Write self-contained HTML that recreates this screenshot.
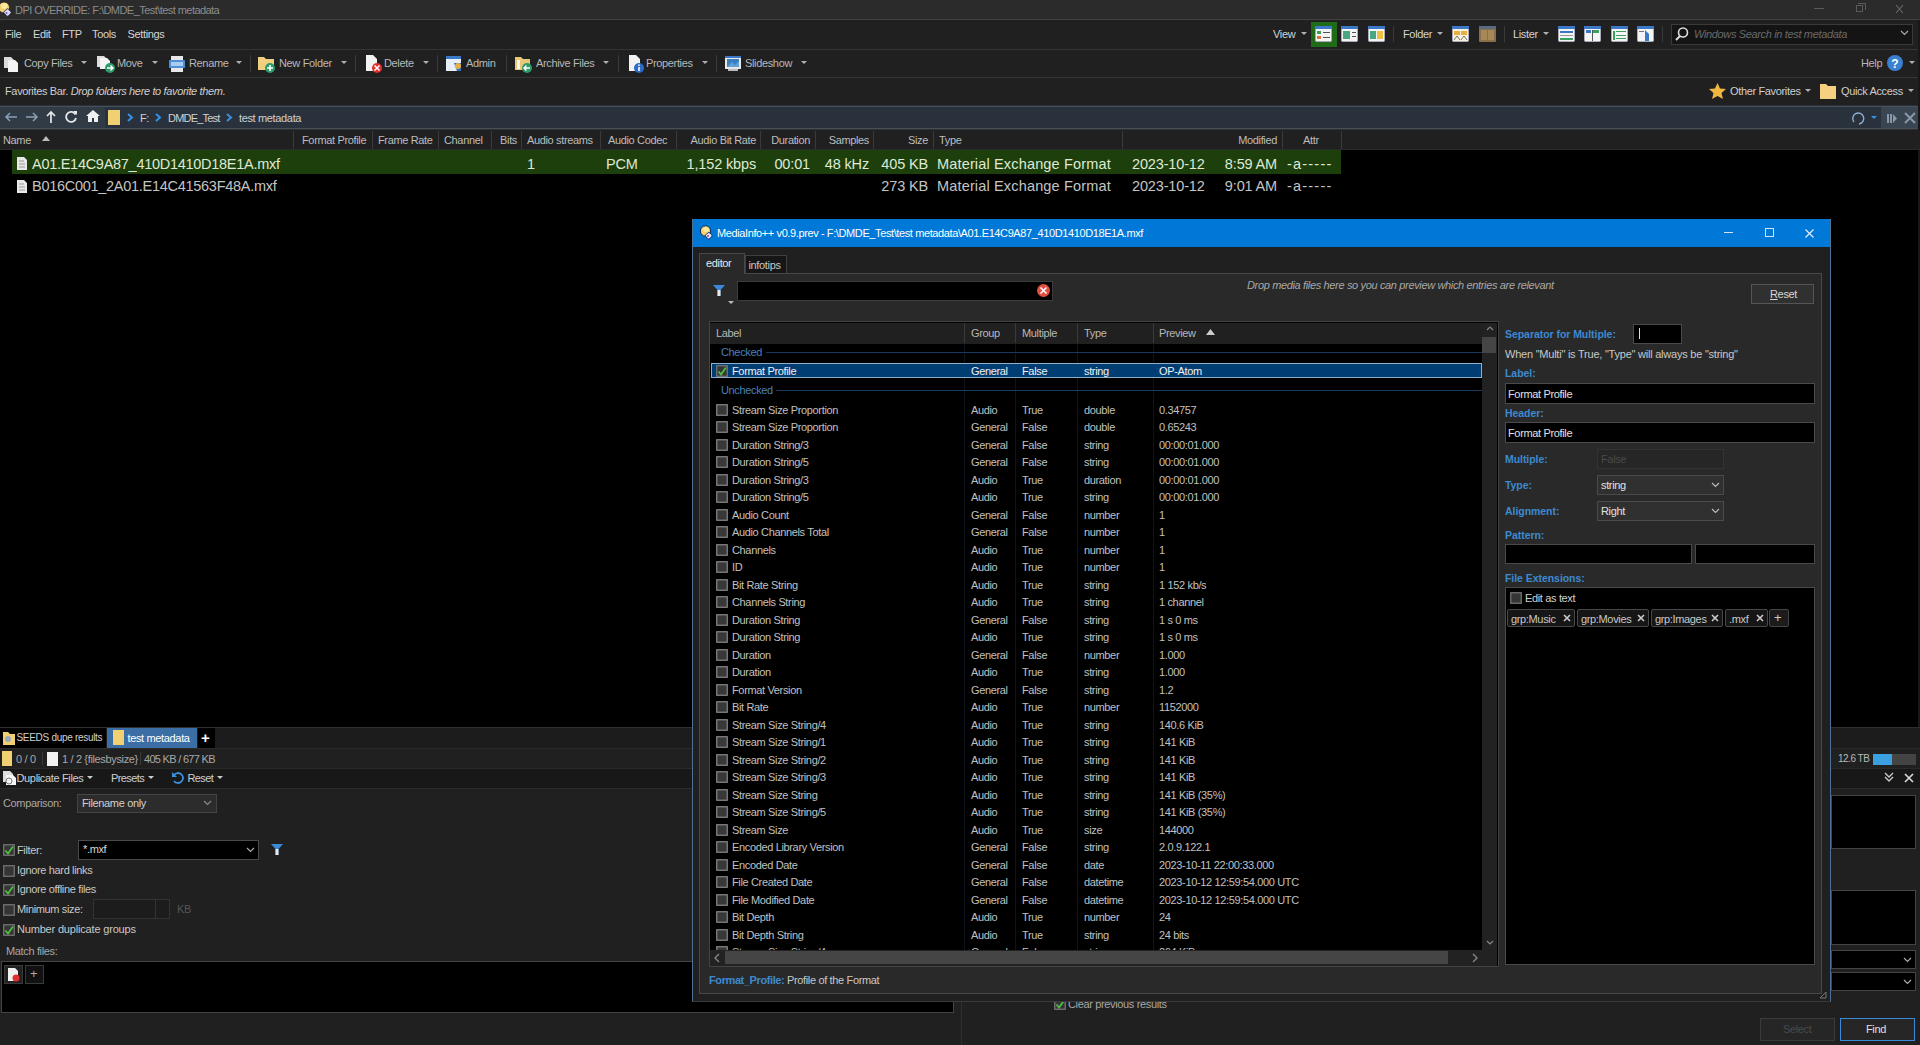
<!DOCTYPE html><html><head><meta charset="utf-8"><style>
html,body{margin:0;padding:0;}
body{width:1920px;height:1045px;overflow:hidden;position:relative;background:#000;font-family:"Liberation Sans",sans-serif;color:#c8c8c8;}
.a{position:absolute;box-sizing:border-box;}
.t{position:absolute;white-space:nowrap;font-size:11px;letter-spacing:-0.35px;}
</style></head><body>
<div class="a" style="left:0px;top:0px;width:1920px;height:19px;background:#2b2b2b"></div>
<div class="a" style="left:0px;top:19px;width:1920px;height:1px;background:#424242"></div>
<div class="a" style="left:0px;top:20px;width:1920px;height:1px;background:#1b1b1b"></div>
<svg class="a" style="left:-2px;top:1px" width="16" height="17" viewBox="0 0 16 17"><circle cx="6" cy="6.5" r="5.5" fill="#f4d070" stroke="#1a1830" stroke-width="0.8"/><circle cx="6.5" cy="5" r="3" fill="#fbe9a0"/><rect x="6.5" y="8.5" width="6" height="6" rx="1.5" transform="rotate(45 9.5 11.5)" fill="#dcd6fa" stroke="#1a1830" stroke-width="0.8"/><circle cx="8.5" cy="12" r="1" fill="#6a68a8"/></svg>
<div class="t" style="left:15px;top:1.5px;line-height:16px;color:#8c8c8c;letter-spacing:-0.55px;">DPI OVERRIDE: F:\DMDE_Test\test metadata</div>
<div class="a" style="left:1814px;top:8px;width:10px;height:1px;background:#5a5a5a"></div>
<div class="a" style="left:1856px;top:5px;width:7px;height:7px;border:1px solid #5a5a5a"></div>
<div class="a" style="left:1858px;top:3px;width:7px;height:1px;background:#5a5a5a"></div>
<div class="a" style="left:1865px;top:3px;width:1px;height:7px;background:#5a5a5a"></div>
<svg class="a" style="left:1895px;top:4px" width="9" height="10" viewBox="0 0 9 10"><path d="M1 1L8 9M8 1L1 9" stroke="#6a6a6a" stroke-width="1.1"/></svg>
<div class="a" style="left:0px;top:20px;width:1920px;height:29px;background:#202020"></div>
<div class="a" style="left:0px;top:49px;width:1920px;height:1px;background:#353535"></div>
<div class="t" style="left:5px;top:26.0px;line-height:16px;color:#d4d4d4;">File</div>
<div class="t" style="left:33px;top:26.0px;line-height:16px;color:#d4d4d4;">Edit</div>
<div class="t" style="left:62px;top:26.0px;line-height:16px;color:#d4d4d4;">FTP</div>
<div class="t" style="left:92px;top:26.0px;line-height:16px;color:#d4d4d4;">Tools</div>
<div class="t" style="left:127.5px;top:26.0px;line-height:16px;color:#d4d4d4;">Settings</div>
<div class="t" style="left:1273px;top:26.0px;line-height:16px;color:#d4d4d4;">View</div>
<div class="a" style="left:1300.5px;top:32.25px;width:0;height:0;border-left:3.5px solid transparent;border-right:3.5px solid transparent;border-top:3.5px solid #b0b0b0"></div>
<div class="a" style="left:1311px;top:22px;width:26px;height:25px;background:#1f6b18"></div>
<svg class="a" style="left:1315px;top:26px" width="17" height="16" viewBox="0 0 17 16"><rect x="0.5" y="0.5" width="16" height="15" rx="1" fill="#f4f4f4" stroke="#aab"/><rect x="0" y="0" width="17" height="3" fill="#3b78c8"/><rect x="2" y="5" width="4" height="3" fill="#3aa060"/><rect x="2" y="10" width="4" height="3" fill="#e07040"/><rect x="8" y="6" width="7" height="1" fill="#555"/><rect x="8" y="11" width="7" height="1" fill="#555"/></svg>
<svg class="a" style="left:1341px;top:26px" width="17" height="16" viewBox="0 0 17 16"><rect x="0.5" y="0.5" width="16" height="15" rx="1" fill="#f4f4f4" stroke="#aab"/><rect x="0" y="0" width="17" height="3" fill="#3b78c8"/><rect x="2" y="5" width="7" height="8" fill="#4aa880"/><rect x="11" y="6" width="4" height="1" fill="#555"/><rect x="11" y="10" width="4" height="1" fill="#555"/></svg>
<svg class="a" style="left:1368px;top:26px" width="17" height="16" viewBox="0 0 17 16"><rect x="0.5" y="0.5" width="16" height="15" rx="1" fill="#f4f4f4" stroke="#aab"/><rect x="0" y="0" width="17" height="3" fill="#3b78c8"/><rect x="2" y="5" width="6" height="8" fill="#4aa880"/><rect x="9" y="5" width="6" height="8" fill="#f0c040"/></svg>
<div class="a" style="left:1393px;top:26px;width:1px;height:16px;background:#3a3a3a"></div>
<div class="t" style="left:1403px;top:26.0px;line-height:16px;color:#d4d4d4;">Folder</div>
<div class="a" style="left:1436.5px;top:32.25px;width:0;height:0;border-left:3.5px solid transparent;border-right:3.5px solid transparent;border-top:3.5px solid #b0b0b0"></div>
<svg class="a" style="left:1452px;top:26px" width="17" height="16" viewBox="0 0 17 16"><rect x="0.5" y="0.5" width="16" height="15" rx="1" fill="#f8f0d8" stroke="#aab"/><rect x="0" y="0" width="17" height="3" fill="#3b78c8"/><rect x="2" y="5" width="6" height="4" fill="#e8b040"/><rect x="9" y="5" width="6" height="4" fill="#e8b040"/><path d="M2 14L5 10L8 14M9 14L12 10L15 14" stroke="#777" fill="none"/></svg>
<svg class="a" style="left:1479px;top:26px" width="17" height="16" viewBox="0 0 17 16"><rect x="0" y="0" width="17" height="16" rx="1" fill="#8a7048"/><rect x="0" y="0" width="17" height="3" fill="#5a6a80"/><rect x="2" y="4" width="6" height="10" fill="#a88858"/><rect x="9" y="4" width="6" height="10" fill="#a88858"/></svg>
<div class="a" style="left:1504px;top:26px;width:1px;height:16px;background:#3a3a3a"></div>
<div class="t" style="left:1513px;top:26.0px;line-height:16px;color:#d4d4d4;">Lister</div>
<div class="a" style="left:1542.5px;top:32.25px;width:0;height:0;border-left:3.5px solid transparent;border-right:3.5px solid transparent;border-top:3.5px solid #b0b0b0"></div>
<svg class="a" style="left:1558px;top:26px" width="17" height="16" viewBox="0 0 17 16"><rect x="0.5" y="0.5" width="16" height="15" rx="1" fill="#f4f4f4" stroke="#aab"/><rect x="0" y="0" width="17" height="3" fill="#3b78c8"/><rect x="2" y="5" width="13" height="2" fill="#3b78c8"/><rect x="2" y="9" width="13" height="1" fill="#999"/><rect x="2" y="12" width="13" height="2" fill="#3aa060"/></svg>
<svg class="a" style="left:1584px;top:26px" width="17" height="16" viewBox="0 0 17 16"><rect x="0.5" y="0.5" width="16" height="15" rx="1" fill="#f4f4f4" stroke="#aab"/><rect x="0" y="0" width="17" height="3" fill="#3b78c8"/><rect x="2" y="4" width="5" height="3" fill="#3b78c8"/><rect x="9" y="4" width="6" height="3" fill="#3aa060"/><rect x="8" y="4" width="1" height="11" fill="#555"/></svg>
<svg class="a" style="left:1611px;top:26px" width="17" height="16" viewBox="0 0 17 16"><rect x="0.5" y="0.5" width="16" height="15" rx="1" fill="#f4f4f4" stroke="#aab"/><rect x="0" y="0" width="17" height="3" fill="#3b78c8"/><rect x="2" y="5" width="2" height="9" fill="#3aa060"/><rect x="5" y="5" width="10" height="1" fill="#3aa060"/><rect x="5" y="9" width="10" height="1" fill="#3aa060"/><rect x="5" y="12" width="10" height="1" fill="#3aa060"/></svg>
<svg class="a" style="left:1637px;top:26px" width="17" height="16" viewBox="0 0 17 16"><rect x="0.5" y="0.5" width="16" height="15" rx="1" fill="#f4f4f4" stroke="#aab"/><rect x="0" y="0" width="17" height="3" fill="#3b78c8"/><path d="M8 4L12 8V15H8Z" fill="#3b78c8"/><rect x="2" y="5" width="5" height="1" fill="#777"/></svg>
<div class="a" style="left:1662px;top:26px;width:1px;height:16px;background:#3a3a3a"></div>
<div class="a" style="left:1671px;top:24px;width:242px;height:21px;background:#141414;border:1px solid #3a3a3a"></div>
<svg class="a" style="left:1674px;top:26px" width="16" height="16" viewBox="0 0 16 16"><circle cx="9" cy="6.5" r="4.5" stroke="#ddd" stroke-width="1.6" fill="none"/><path d="M6 10L2 14" stroke="#ddd" stroke-width="2"/></svg>
<div class="t" style="left:1694px;top:26.0px;line-height:16px;color:#6a6a6a;font-style:italic;">Windows Search in test metadata</div>
<svg class="a" style="left:1900px;top:30px" width="9" height="6" viewBox="0 0 9 6"><path d="M1 1L4.5 4.5L8 1" stroke="#aaa" fill="none" stroke-width="1.2"/></svg>
<div class="a" style="left:0px;top:50px;width:1920px;height:27px;background:#202020"></div>
<div class="a" style="left:0px;top:77px;width:1920px;height:1px;background:#353535"></div>
<svg class="a" style="left:3px;top:55px" width="18" height="18" viewBox="0 0 18 18"><path d="M1 2H8L11 5V13H1Z" fill="#dcdcdc"/><path d="M5 5H12L15 8V17H5Z" fill="#f4f4f4"/></svg>
<div class="t" style="left:24px;top:55.0px;line-height:16px;color:#b8b8b8;">Copy Files</div>
<div class="a" style="left:80.5px;top:61.25px;width:0;height:0;border-left:3.5px solid transparent;border-right:3.5px solid transparent;border-top:3.5px solid #b0b0b0"></div>
<svg class="a" style="left:96px;top:54px" width="20" height="20" viewBox="0 0 20 20"><path d="M1 2H8L11 5V13H1Z" fill="#dcdcdc"/><path d="M4 4H11L14 7V15H4Z" fill="#f4f4f4"/><circle cx="14" cy="14" r="5" fill="#2e9a6a"/><path d="M11 14H17M14.5 11.5L17 14L14.5 16.5" stroke="#fff" stroke-width="1.4" fill="none"/></svg>
<div class="t" style="left:117px;top:55.0px;line-height:16px;color:#b8b8b8;">Move</div>
<div class="a" style="left:151.5px;top:61.25px;width:0;height:0;border-left:3.5px solid transparent;border-right:3.5px solid transparent;border-top:3.5px solid #b0b0b0"></div>
<svg class="a" style="left:168px;top:55px" width="18" height="18" viewBox="0 0 18 18"><rect x="3" y="1" width="12" height="5" fill="#e8e8e8"/><rect x="1" y="5" width="16" height="8" rx="1" fill="#4f8fd8"/><rect x="3" y="7" width="12" height="4" fill="#a8cdf0"/><rect x="3" y="13" width="12" height="4" fill="#e8e8e8"/></svg>
<div class="t" style="left:189px;top:55.0px;line-height:16px;color:#b8b8b8;">Rename</div>
<div class="a" style="left:235.5px;top:61.25px;width:0;height:0;border-left:3.5px solid transparent;border-right:3.5px solid transparent;border-top:3.5px solid #b0b0b0"></div>
<div class="a" style="left:250px;top:55px;width:1px;height:17px;background:#3a3a3a"></div>
<svg class="a" style="left:257px;top:54px" width="20" height="20" viewBox="0 0 20 20"><path d="M1 3H7L9 5H17V16H1Z" fill="#f0d080"/><circle cx="13" cy="14" r="5" fill="#2e9a6a"/><path d="M10 14H16M13 11V17" stroke="#fff" stroke-width="1.6"/></svg>
<div class="t" style="left:279px;top:55.0px;line-height:16px;color:#b8b8b8;">New Folder</div>
<div class="a" style="left:340.5px;top:61.25px;width:0;height:0;border-left:3.5px solid transparent;border-right:3.5px solid transparent;border-top:3.5px solid #b0b0b0"></div>
<div class="a" style="left:355px;top:55px;width:1px;height:17px;background:#3a3a3a"></div>
<svg class="a" style="left:364px;top:54px" width="20" height="20" viewBox="0 0 20 20"><path d="M2 1H9L13 5V17H2Z" fill="#f2f2f2"/><circle cx="13" cy="14" r="5" fill="#e03030"/><path d="M10.5 11.5L15.5 16.5M15.5 11.5L10.5 16.5" stroke="#fff" stroke-width="1.5"/></svg>
<div class="t" style="left:384px;top:55.0px;line-height:16px;color:#b8b8b8;">Delete</div>
<div class="a" style="left:422.5px;top:61.25px;width:0;height:0;border-left:3.5px solid transparent;border-right:3.5px solid transparent;border-top:3.5px solid #b0b0b0"></div>
<div class="a" style="left:437px;top:55px;width:1px;height:17px;background:#3a3a3a"></div>
<svg class="a" style="left:445px;top:54px" width="20" height="20" viewBox="0 0 20 20"><rect x="1" y="2" width="15" height="15" fill="#e8eef8"/><rect x="1" y="2" width="15" height="3" fill="#3b78c8"/><path d="M9 9L16 9L16 17L12 17Z" fill="#3070b8"/><circle cx="13" cy="12" r="3" fill="#e8b040"/></svg>
<div class="t" style="left:466px;top:55.0px;line-height:16px;color:#b8b8b8;">Admin</div>
<div class="a" style="left:506px;top:55px;width:1px;height:17px;background:#3a3a3a"></div>
<svg class="a" style="left:514px;top:54px" width="20" height="20" viewBox="0 0 20 20"><path d="M1 3H7L9 5H16V16H1Z" fill="#e8c878"/><rect x="3" y="6" width="3" height="9" fill="#f4f4f4"/><circle cx="13" cy="14" r="5" fill="#2e9a6a"/><path d="M16 14H10M12.5 11.5L10 14L12.5 16.5" stroke="#fff" stroke-width="1.4" fill="none"/></svg>
<div class="t" style="left:536px;top:55.0px;line-height:16px;color:#b8b8b8;">Archive Files</div>
<div class="a" style="left:602.5px;top:61.25px;width:0;height:0;border-left:3.5px solid transparent;border-right:3.5px solid transparent;border-top:3.5px solid #b0b0b0"></div>
<div class="a" style="left:618px;top:55px;width:1px;height:17px;background:#3a3a3a"></div>
<svg class="a" style="left:627px;top:54px" width="20" height="20" viewBox="0 0 20 20"><path d="M2 1H9L13 5V17H2Z" fill="#f2f2f2"/><circle cx="12" cy="14" r="5" fill="#2c6cc8"/><rect x="11.2" y="13" width="1.6" height="4" fill="#fff"/><rect x="11.2" y="10.5" width="1.6" height="1.5" fill="#fff"/></svg>
<div class="t" style="left:646px;top:55.0px;line-height:16px;color:#b8b8b8;">Properties</div>
<div class="a" style="left:701.5px;top:61.25px;width:0;height:0;border-left:3.5px solid transparent;border-right:3.5px solid transparent;border-top:3.5px solid #b0b0b0"></div>
<div class="a" style="left:716px;top:55px;width:1px;height:17px;background:#3a3a3a"></div>
<svg class="a" style="left:724px;top:54px" width="20" height="20" viewBox="0 0 20 20"><rect x="1" y="2" width="16" height="13" fill="#e8e8e8"/><rect x="1" y="2" width="16" height="2" fill="#3b78c8"/><rect x="3" y="5" width="12" height="8" fill="#3a80c0"/><path d="M3 13L8 8L11 11L15 7V13Z" fill="#60a0d8"/><rect x="4" y="15" width="10" height="2" fill="#bbb"/></svg>
<div class="t" style="left:745px;top:55.0px;line-height:16px;color:#b8b8b8;">Slideshow</div>
<div class="a" style="left:800.5px;top:61.25px;width:0;height:0;border-left:3.5px solid transparent;border-right:3.5px solid transparent;border-top:3.5px solid #b0b0b0"></div>
<div class="t" style="left:1861px;top:55.0px;line-height:16px;color:#b8b8b8;">Help</div>
<svg class="a" style="left:1886px;top:54px" width="18" height="18" viewBox="0 0 18 18"><circle cx="9" cy="9" r="8" fill="#3a7fd0"/><text x="9" y="13.5" font-size="12" font-weight="bold" text-anchor="middle" fill="#fff" font-family="Liberation Sans">?</text></svg>
<div class="a" style="left:1908.5px;top:61.25px;width:0;height:0;border-left:3.5px solid transparent;border-right:3.5px solid transparent;border-top:3.5px solid #b0b0b0"></div>
<div class="a" style="left:0px;top:78px;width:1920px;height:27px;background:#202020"></div>
<div class="t" style="left:5px;top:83.0px;line-height:16px;color:#cfcfcf;">Favorites Bar. <i>Drop folders here to favorite them.</i></div>
<svg class="a" style="left:1708px;top:82px" width="19" height="18" viewBox="0 0 19 18"><path d="M9.5 1L12 6.5L18 7L13.5 11L15 17L9.5 14L4 17L5.5 11L1 7L7 6.5Z" fill="#f0b840"/></svg>
<div class="t" style="left:1730px;top:83.0px;line-height:16px;color:#cfcfcf;">Other Favorites</div>
<div class="a" style="left:1804.5px;top:89.25px;width:0;height:0;border-left:3.5px solid transparent;border-right:3.5px solid transparent;border-top:3.5px solid #b0b0b0"></div>
<svg class="a" style="left:1819px;top:82px" width="19" height="18" viewBox="0 0 19 18"><path d="M1 2H7L9 4H17V17H1Z" fill="#f4d080"/></svg>
<div class="t" style="left:1841px;top:83.0px;line-height:16px;color:#cfcfcf;">Quick Access</div>
<div class="a" style="left:1907.5px;top:89.25px;width:0;height:0;border-left:3.5px solid transparent;border-right:3.5px solid transparent;border-top:3.5px solid #b0b0b0"></div>
<div class="a" style="left:0px;top:105px;width:1920px;height:25px;background:#29323c"></div>
<div class="a" style="left:0px;top:107px;width:105px;height:21px;background:#303b46"></div>
<div class="a" style="left:0px;top:106px;width:1920px;height:1px;background:#4a5058"></div>
<div class="a" style="left:1881px;top:107px;width:37px;height:21px;background:#3a4552"></div>
<div class="a" style="left:0px;top:128px;width:1920px;height:1px;background:#4e4e4e"></div>
<div class="a" style="left:1918px;top:20px;width:2px;height:1025px;background:#181818"></div>
<svg class="a" style="left:3px;top:109px" width="16" height="16" viewBox="0 0 16 16"><path d="M14 8H3M7 4L3 8L7 12" stroke="#8aa0b8" stroke-width="1.5" fill="none"/></svg>
<svg class="a" style="left:24px;top:109px" width="16" height="16" viewBox="0 0 16 16"><path d="M2 8H13M9 4L13 8L9 12" stroke="#8aa0b8" stroke-width="1.5" fill="none"/></svg>
<svg class="a" style="left:43px;top:109px" width="16" height="16" viewBox="0 0 16 16"><path d="M8 14V3M4 7L8 3L12 7" stroke="#e8e8e8" stroke-width="1.7" fill="none"/></svg>
<svg class="a" style="left:63px;top:109px" width="16" height="16" viewBox="0 0 16 16"><path d="M12.5 5.5A5 5 0 1 0 13 9" stroke="#e8e8e8" stroke-width="1.8" fill="none"/><path d="M10 2H14V6Z" fill="#e8e8e8"/></svg>
<svg class="a" style="left:85px;top:108px" width="16" height="16" viewBox="0 0 16 16"><path d="M8 2L1 8H3V14H13V8H15Z" fill="#f0f0f0"/><rect x="7" y="10" width="2" height="4" fill="#2c3844"/></svg>
<div class="a" style="left:108px;top:110px;width:12px;height:15px;background:#f0d070"></div>
<svg class="a" style="left:127px;top:113px" width="7" height="9" viewBox="0 0 7 9"><path d="M1 1L5 4.5L1 8" stroke="#3a90e0" stroke-width="2" fill="none"/></svg>
<svg class="a" style="left:155px;top:113px" width="7" height="9" viewBox="0 0 7 9"><path d="M1 1L5 4.5L1 8" stroke="#3a90e0" stroke-width="2" fill="none"/></svg>
<svg class="a" style="left:226px;top:113px" width="7" height="9" viewBox="0 0 7 9"><path d="M1 1L5 4.5L1 8" stroke="#3a90e0" stroke-width="2" fill="none"/></svg>
<div class="t" style="left:140px;top:109.5px;line-height:16px;color:#d0d0d0;">F:</div>
<div class="t" style="left:168px;top:109.5px;line-height:16px;color:#d0d0d0;letter-spacing:-0.8px;">DMDE_Test</div>
<div class="t" style="left:239px;top:109.5px;line-height:16px;color:#d0d0d0;">test metadata</div>
<svg class="a" style="left:1850px;top:110px" width="16" height="16" viewBox="0 0 16 16"><path d="M4 12A5.5 5.5 0 1 1 9 14" stroke="#8ab0d8" stroke-width="1.4" fill="none"/></svg>
<div class="a" style="left:1870.5px;top:116.25px;width:0;height:0;border-left:3.5px solid transparent;border-right:3.5px solid transparent;border-top:3.5px solid #3a90e0"></div>
<svg class="a" style="left:1885px;top:110px" width="16" height="16" viewBox="0 0 16 16"><rect x="2" y="4" width="2" height="9" fill="#8898a8"/><rect x="5" y="4" width="2" height="9" fill="#8898a8"/><path d="M8 4L12 8.5L8 13Z" fill="#8898a8"/></svg>
<svg class="a" style="left:1902px;top:110px" width="16" height="16" viewBox="0 0 16 16"><path d="M3 3L13 13M13 3L3 13" stroke="#8898a8" stroke-width="2"/></svg>
<div class="a" style="left:0px;top:130px;width:1920px;height:20px;background:#202020"></div>
<div class="a" style="left:0px;top:149px;width:1920px;height:1px;background:#2a2a2a"></div>
<div class="a" style="left:293px;top:131px;width:1px;height:18px;background:#3a3a3a"></div>
<div class="a" style="left:372px;top:131px;width:1px;height:18px;background:#3a3a3a"></div>
<div class="a" style="left:438px;top:131px;width:1px;height:18px;background:#3a3a3a"></div>
<div class="a" style="left:491px;top:131px;width:1px;height:18px;background:#3a3a3a"></div>
<div class="a" style="left:521px;top:131px;width:1px;height:18px;background:#3a3a3a"></div>
<div class="a" style="left:600px;top:131px;width:1px;height:18px;background:#3a3a3a"></div>
<div class="a" style="left:676px;top:131px;width:1px;height:18px;background:#3a3a3a"></div>
<div class="a" style="left:760px;top:131px;width:1px;height:18px;background:#3a3a3a"></div>
<div class="a" style="left:815px;top:131px;width:1px;height:18px;background:#3a3a3a"></div>
<div class="a" style="left:873px;top:131px;width:1px;height:18px;background:#3a3a3a"></div>
<div class="a" style="left:933px;top:131px;width:1px;height:18px;background:#3a3a3a"></div>
<div class="a" style="left:1122px;top:131px;width:1px;height:18px;background:#3a3a3a"></div>
<div class="a" style="left:1282px;top:131px;width:1px;height:18px;background:#3a3a3a"></div>
<div class="a" style="left:1341px;top:131px;width:1px;height:18px;background:#3a3a3a"></div>
<div class="t" style="left:3px;top:132.0px;line-height:16px;color:#bdbdbd;">Name</div>
<svg class="a" style="left:42px;top:136px" width="8" height="5" viewBox="0 0 8 5"><path d="M0 5L4 0L8 5Z" fill="#bbb"/></svg>
<div class="t" style="left:302px;top:132.0px;line-height:16px;color:#bdbdbd;">Format Profile</div>
<div class="t" style="left:378px;top:132.0px;line-height:16px;color:#bdbdbd;">Frame Rate</div>
<div class="t" style="left:444px;top:132.0px;line-height:16px;color:#bdbdbd;">Channel</div>
<div class="t" style="right:1403px;top:132.0px;line-height:16px;color:#bdbdbd;">Bits</div>
<div class="t" style="left:527px;top:132.0px;line-height:16px;color:#bdbdbd;">Audio streams</div>
<div class="t" style="left:608px;top:132.0px;line-height:16px;color:#bdbdbd;">Audio Codec</div>
<div class="t" style="right:1164px;top:132.0px;line-height:16px;color:#bdbdbd;">Audio Bit Rate</div>
<div class="t" style="right:1110px;top:132.0px;line-height:16px;color:#bdbdbd;">Duration</div>
<div class="t" style="right:1051px;top:132.0px;line-height:16px;color:#bdbdbd;">Samples</div>
<div class="t" style="right:992px;top:132.0px;line-height:16px;color:#bdbdbd;">Size</div>
<div class="t" style="left:939px;top:132.0px;line-height:16px;color:#bdbdbd;">Type</div>
<div class="t" style="right:643px;top:132.0px;line-height:16px;color:#bdbdbd;">Modified</div>
<div class="t" style="left:1303px;top:132.0px;line-height:16px;color:#bdbdbd;">Attr</div>
<div class="a" style="left:12px;top:150px;width:1329px;height:23.5px;background:#1d3f0b"></div>
<svg class="a" style="left:16px;top:156.0px" width="12" height="15" viewBox="0 0 12 15"><path d="M1 1H8L11 4V14H1Z" fill="#e8e8e8"/><path d="M3 5H8M3 8H9M3 11H9" stroke="#999"/></svg>
<div class="t" style="left:32px;top:153.5px;line-height:20px;font-size:14.5px;letter-spacing:-0.15px;color:#dfe9d6;letter-spacing:-0.28px;">A01.E14C9A87_410D1410D18E1A.mxf</div>
<div class="t" style="left:527px;top:153.5px;line-height:20px;font-size:14.5px;letter-spacing:-0.15px;color:#dfe9d6;">1</div>
<div class="t" style="left:606px;top:153.5px;line-height:20px;font-size:14.5px;letter-spacing:-0.15px;color:#dfe9d6;">PCM</div>
<div class="t" style="right:1164px;top:153.5px;line-height:20px;font-size:14.5px;letter-spacing:-0.15px;color:#dfe9d6;">1,152 kbps</div>
<div class="t" style="right:1110px;top:153.5px;line-height:20px;font-size:14.5px;letter-spacing:-0.15px;color:#dfe9d6;">00:01</div>
<div class="t" style="right:1051px;top:153.5px;line-height:20px;font-size:14.5px;letter-spacing:-0.15px;color:#dfe9d6;">48 kHz</div>
<div class="t" style="right:992px;top:153.5px;line-height:20px;font-size:14.5px;letter-spacing:-0.15px;color:#dfe9d6;">405 KB</div>
<div class="t" style="left:937px;top:153.5px;line-height:20px;font-size:14.5px;letter-spacing:-0.15px;color:#dfe9d6;letter-spacing:0.16px;">Material Exchange Format</div>
<div class="t" style="left:1132px;top:153.5px;line-height:20px;font-size:14.5px;letter-spacing:-0.15px;color:#dfe9d6;">2023-10-12</div>
<div class="t" style="right:643px;top:153.5px;line-height:20px;font-size:14.5px;letter-spacing:-0.15px;color:#dfe9d6;">8:59 AM</div>
<div class="t" style="left:1287px;top:153.5px;line-height:20px;font-size:14.5px;letter-spacing:-0.15px;color:#dfe9d6;letter-spacing:1.2px;">-a-----</div>
<svg class="a" style="left:16px;top:178.8px" width="12" height="15" viewBox="0 0 12 15"><path d="M1 1H8L11 4V14H1Z" fill="#e8e8e8"/><path d="M3 5H8M3 8H9M3 11H9" stroke="#999"/></svg>
<div class="t" style="left:32px;top:176.3px;line-height:20px;font-size:14.5px;letter-spacing:-0.15px;color:#c4c4c4;letter-spacing:-0.28px;">B016C001_2A01.E14C41563F48A.mxf</div>
<div class="t" style="right:992px;top:176.3px;line-height:20px;font-size:14.5px;letter-spacing:-0.15px;color:#c4c4c4;">273 KB</div>
<div class="t" style="left:937px;top:176.3px;line-height:20px;font-size:14.5px;letter-spacing:-0.15px;color:#c4c4c4;letter-spacing:0.16px;">Material Exchange Format</div>
<div class="t" style="left:1132px;top:176.3px;line-height:20px;font-size:14.5px;letter-spacing:-0.15px;color:#c4c4c4;">2023-10-12</div>
<div class="t" style="right:643px;top:176.3px;line-height:20px;font-size:14.5px;letter-spacing:-0.15px;color:#c4c4c4;">9:01 AM</div>
<div class="t" style="left:1287px;top:176.3px;line-height:20px;font-size:14.5px;letter-spacing:-0.15px;color:#c4c4c4;letter-spacing:1.2px;">-a-----</div>
<div class="a" style="left:0px;top:727px;width:1920px;height:1px;background:#2e2e2e"></div>
<div class="a" style="left:0px;top:728px;width:1920px;height:20px;background:#1c1c1c"></div>
<div class="a" style="left:0px;top:728px;width:106px;height:20px;background:#000"></div>
<div class="a" style="left:107px;top:728px;width:90px;height:20px;background:#3c6ea6"></div>
<div class="a" style="left:198px;top:728px;width:17px;height:20px;background:#000"></div>
<svg class="a" style="left:2px;top:730px" width="14" height="16" viewBox="0 0 14 16"><path d="M1 2H6L8 4H13V15H1Z" fill="#f0d070"/><circle cx="6" cy="9" r="3" fill="#9ab"/></svg>
<div class="t" style="left:16.5px;top:729.5px;line-height:16px;color:#d0d0d0;font-size:10px;letter-spacing:-0.3px;">SEEDS dupe results</div>
<div class="a" style="left:113px;top:730px;width:11px;height:15px;background:#f0d070"></div>
<div class="t" style="left:127.5px;top:729.5px;line-height:16px;color:#ffffff;">test metadata</div>
<div class="t" style="left:201px;top:729.5px;line-height:16px;color:#fff;font-size:15px;font-weight:bold;">+</div>
<div class="a" style="left:0px;top:748px;width:1920px;height:1px;background:#2a2a2a"></div>
<div class="a" style="left:0px;top:749px;width:1920px;height:19px;background:#202020"></div>
<div class="a" style="left:2px;top:751px;width:10px;height:15px;background:#f0d070"></div>
<div class="t" style="left:16px;top:751.0px;line-height:16px;color:#a8a8a8;">0 / 0</div>
<div class="a" style="left:42px;top:752px;width:1px;height:13px;background:#3a3a3a"></div>
<div class="a" style="left:47px;top:752px;width:11px;height:14px;background:#f2f2f2"></div>
<div class="t" style="left:62px;top:751.0px;line-height:16px;color:#a8a8a8;">1 / 2 {filesbysize}</div>
<div class="a" style="left:140px;top:752px;width:1px;height:13px;background:#3a3a3a"></div>
<div class="t" style="left:144px;top:751.0px;line-height:16px;color:#a8a8a8;letter-spacing:-0.7px;">405 KB / 677 KB</div>
<div class="a" style="left:0px;top:768px;width:1920px;height:1px;background:#2a2a2a"></div>
<div class="a" style="left:0px;top:769px;width:1920px;height:19px;background:#181818"></div>
<svg class="a" style="left:2px;top:770px" width="14" height="16" viewBox="0 0 14 16"><path d="M1 1H8L11 4V12H1Z" fill="#ddd"/><path d="M4 5H11L14 8V15H4Z" fill="#f4f4f4"/><circle cx="7" cy="11" r="3" stroke="#777" fill="none"/></svg>
<div class="t" style="left:16.5px;top:770.0px;line-height:16px;color:#cfcfcf;">Duplicate Files</div>
<div class="a" style="left:86.5px;top:776.25px;width:0;height:0;border-left:3.5px solid transparent;border-right:3.5px solid transparent;border-top:3.5px solid #ccc"></div>
<div class="t" style="left:111px;top:770.0px;line-height:16px;color:#cfcfcf;letter-spacing:-0.6px;">Presets</div>
<div class="a" style="left:147.5px;top:776.25px;width:0;height:0;border-left:3.5px solid transparent;border-right:3.5px solid transparent;border-top:3.5px solid #ccc"></div>
<svg class="a" style="left:171px;top:771px" width="14" height="14" viewBox="0 0 14 14"><path d="M3 4A5 5 0 1 1 3 10" stroke="#3a90e0" stroke-width="1.8" fill="none"/><path d="M1 1V6H6Z" fill="#3a90e0"/></svg>
<div class="t" style="left:187.5px;top:770.0px;line-height:16px;color:#cfcfcf;letter-spacing:-0.6px;">Reset</div>
<div class="a" style="left:216.5px;top:776.25px;width:0;height:0;border-left:3.5px solid transparent;border-right:3.5px solid transparent;border-top:3.5px solid #ccc"></div>
<div class="a" style="left:0px;top:788px;width:1920px;height:1px;background:#2c2c2c"></div>
<div class="a" style="left:0px;top:789px;width:1920px;height:256px;background:#202020"></div>
<div class="t" style="left:3px;top:795.0px;line-height:16px;color:#a8a8a8;">Comparison:</div>
<div class="a" style="left:77px;top:794px;width:140px;height:19px;background:#2c2c2c;border:1px solid #444"></div>
<div class="t" style="left:82px;top:795.0px;line-height:16px;color:#d0d0d0;">Filename only</div>
<svg class="a" style="left:203px;top:800px" width="9" height="6" viewBox="0 0 9 6"><path d="M1 1L4.5 4.5L8 1" stroke="#888" fill="none" stroke-width="1.2"/></svg>
<svg class="a" style="left:3px;top:844px" width="12" height="12" viewBox="0 0 12 12"><rect x="0.75" y="0.75" width="10.5" height="10.5" fill="#353535" stroke="#7a7a7a" stroke-width="1.2"/><path d="M2.5 6.5L5 9.5L10 2.5" stroke="#4cc040" stroke-width="1.8" fill="none"/></svg>
<div class="t" style="left:17px;top:842.0px;line-height:16px;color:#c8c8c8;">Filter:</div>
<div class="a" style="left:78px;top:840px;width:181px;height:20px;background:#000;border:1px solid #4a4a4a"></div>
<div class="t" style="left:83px;top:841.0px;line-height:16px;color:#d8d8d8;">*.mxf</div>
<svg class="a" style="left:246px;top:847px" width="9" height="6" viewBox="0 0 9 6"><path d="M1 1L4.5 4.5L8 1" stroke="#aaa" fill="none" stroke-width="1.2"/></svg>
<svg class="a" style="left:270px;top:842px" width="14" height="14" viewBox="0 0 14 14"><path d="M1 2H13L8.5 7V13H5.5V7Z" fill="#3a8ad8"/><rect x="5.5" y="7" width="3" height="6" fill="#e8e8e8"/></svg>
<svg class="a" style="left:3px;top:864.5px" width="12" height="12" viewBox="0 0 12 12"><rect x="0.75" y="0.75" width="10.5" height="10.5" fill="#353535" stroke="#7a7a7a" stroke-width="1.2"/></svg>
<div class="t" style="left:17px;top:862.0px;line-height:16px;color:#c8c8c8;">Ignore hard links</div>
<svg class="a" style="left:3px;top:883.5px" width="12" height="12" viewBox="0 0 12 12"><rect x="0.75" y="0.75" width="10.5" height="10.5" fill="#353535" stroke="#7a7a7a" stroke-width="1.2"/><path d="M2.5 6.5L5 9.5L10 2.5" stroke="#4cc040" stroke-width="1.8" fill="none"/></svg>
<div class="t" style="left:17px;top:881.0px;line-height:16px;color:#c8c8c8;">Ignore offline files</div>
<svg class="a" style="left:3px;top:903.5px" width="12" height="12" viewBox="0 0 12 12"><rect x="0.75" y="0.75" width="10.5" height="10.5" fill="#353535" stroke="#7a7a7a" stroke-width="1.2"/></svg>
<div class="t" style="left:17px;top:901.0px;line-height:16px;color:#c8c8c8;">Minimum size:</div>
<div class="a" style="left:93px;top:899px;width:77px;height:20px;background:#1c1c1c;border:1px solid #333"></div>
<div class="a" style="left:155px;top:900px;width:1px;height:18px;background:#333"></div>
<div class="t" style="left:177px;top:901.0px;line-height:16px;color:#555;">KB</div>
<svg class="a" style="left:3px;top:923.5px" width="12" height="12" viewBox="0 0 12 12"><rect x="0.75" y="0.75" width="10.5" height="10.5" fill="#353535" stroke="#7a7a7a" stroke-width="1.2"/><path d="M2.5 6.5L5 9.5L10 2.5" stroke="#4cc040" stroke-width="1.8" fill="none"/></svg>
<div class="t" style="left:17px;top:921.0px;line-height:16px;color:#c8c8c8;letter-spacing:-0.18px;">Number duplicate groups</div>
<div class="t" style="left:6px;top:943.0px;line-height:16px;color:#a8a8a8;">Match files:</div>
<div class="a" style="left:1px;top:961px;width:953px;height:52px;background:#000;border:1px solid #444"></div>
<div class="a" style="left:4px;top:965px;width:19px;height:19px;background:#222;border:1px solid #3a3a3a"></div>
<svg class="a" style="left:7px;top:967px" width="14" height="15" viewBox="0 0 14 15"><path d="M1 1H8L11 4V14H1Z" fill="#f0f0f0"/><circle cx="9" cy="11" r="3.5" fill="#e03030"/></svg>
<div class="a" style="left:25px;top:965px;width:19px;height:19px;background:#111;border:1px solid #3a3a3a"></div>
<div class="t" style="left:30px;top:966.0px;line-height:16px;color:#aaa;font-size:13px;">+</div>
<div class="a" style="left:961px;top:1000px;width:1px;height:45px;background:#2e2e2e"></div>
<svg class="a" style="left:1054px;top:998px" width="12" height="12" viewBox="0 0 12 12"><rect x="0.75" y="0.75" width="10.5" height="10.5" fill="#353535" stroke="#7a7a7a" stroke-width="1.2"/><path d="M2.5 6.5L5 9.5L10 2.5" stroke="#4cc040" stroke-width="1.8" fill="none"/></svg>
<div class="t" style="left:1068px;top:996.0px;line-height:16px;color:#a8a8a8;">Clear previous results</div>
<div class="a" style="left:1831px;top:728px;width:89px;height:20px;background:#1c1c1c"></div>
<div class="t" style="left:1838px;top:751.0px;line-height:16px;color:#b8b8b8;font-size:10px;letter-spacing:-0.5px;">12.6 TB</div>
<div class="a" style="left:1873px;top:754px;width:43px;height:11px;background:#444"></div>
<div class="a" style="left:1873px;top:754px;width:19px;height:11px;background:#3aa0e0"></div>
<svg class="a" style="left:1884px;top:772px" width="10" height="10" viewBox="0 0 10 10"><path d="M1 1L5 5L9 1M1 5L5 9L9 5" stroke="#ccc" stroke-width="1.3" fill="none"/></svg>
<svg class="a" style="left:1904px;top:773px" width="10" height="10" viewBox="0 0 10 10"><path d="M1 1L9 9M9 1L1 9" stroke="#ddd" stroke-width="1.6"/></svg>
<div class="a" style="left:1831px;top:795px;width:85px;height:54px;background:#000;border:1px solid #444"></div>
<div class="a" style="left:1831px;top:890px;width:85px;height:55px;background:#000;border:1px solid #444"></div>
<div class="a" style="left:1831px;top:950px;width:85px;height:19px;background:#000;border:1px solid #444"></div>
<div class="a" style="left:1831px;top:972px;width:85px;height:19px;background:#000;border:1px solid #444"></div>
<svg class="a" style="left:1903px;top:957px" width="9" height="6" viewBox="0 0 9 6"><path d="M1 1L4.5 4.5L8 1" stroke="#aaa" fill="none" stroke-width="1.2"/></svg>
<svg class="a" style="left:1903px;top:979px" width="9" height="6" viewBox="0 0 9 6"><path d="M1 1L4.5 4.5L8 1" stroke="#aaa" fill="none" stroke-width="1.2"/></svg>
<div class="a" style="left:1760px;top:1018px;width:75px;height:23px;background:#262626;border:1px solid #3a3a3a"></div>
<div class="t" style="left:1783px;top:1021.0px;line-height:16px;color:#4a4a4a;">Select</div>
<div class="a" style="left:1840px;top:1018px;width:75px;height:23px;background:#262626;border:1px solid #3a8ad8"></div>
<div class="t" style="left:1866px;top:1021.0px;line-height:16px;color:#e0e0e0;">Find</div>
<div class="a" style="left:692px;top:219px;width:1139px;height:783px;background:#202020;border:1px solid #4f7394;border-top:none;border-bottom:1px solid #3a3a3a"></div>
<div class="a" style="left:693px;top:219px;width:1137px;height:28px;background:#0078d7"></div>
<svg class="a" style="left:699px;top:224px" width="16" height="17" viewBox="0 0 16 17"><circle cx="6.5" cy="7" r="5.2" fill="#f4d070" stroke="#0a2a60" stroke-width="1"/><circle cx="7" cy="5.5" r="2.8" fill="#fbe9a0"/><rect x="7" y="9" width="5.5" height="5.5" rx="1.5" transform="rotate(45 9.75 11.75)" fill="#e4def8" stroke="#0a2a60" stroke-width="0.9"/><circle cx="9" cy="12" r="0.9" fill="#5a58a0"/></svg>
<div class="t" style="left:717px;top:225.0px;line-height:16px;color:#ffffff;letter-spacing:-0.39px;">MediaInfo++ v0.9.prev - F:\DMDE_Test\test metadata\A01.E14C9A87_410D1410D18E1A.mxf</div>
<div class="a" style="left:1724px;top:232px;width:9px;height:1px;background:#d8e4f4"></div>
<div class="a" style="left:1765px;top:228px;width:9px;height:9px;border:1px solid #d8e4f4"></div>
<svg class="a" style="left:1805px;top:229px" width="9" height="9" viewBox="0 0 9 9"><path d="M0.5 0.5L8.5 8.5M8.5 0.5L0.5 8.5" stroke="#e8f0ff" stroke-width="1.1"/></svg>
<div class="a" style="left:699px;top:253px;width:46px;height:21px;background:#292929;border:1px solid #484848;border-bottom:none"></div>
<div class="t" style="left:706px;top:255.0px;line-height:16px;color:#e8e8e8;">editor</div>
<div class="a" style="left:745px;top:255px;width:42px;height:18px;background:#161616;border:1px solid #404040;border-bottom:none"></div>
<div class="t" style="left:748.5px;top:256.5px;line-height:16px;color:#c8c8c8;">infotips</div>
<div class="a" style="left:699px;top:273px;width:1123px;height:721px;border:1px solid #484848;background:#292929"></div>
<div class="a" style="left:700px;top:273px;width:44px;height:2px;background:#292929"></div>
<svg class="a" style="left:712px;top:283px" width="14" height="14" viewBox="0 0 14 14"><path d="M1 2H13L8.5 7V13H5.5V7Z" fill="#3a8ad8"/><rect x="5.5" y="7" width="3" height="6" fill="#e8e8e8"/></svg>
<div class="a" style="left:728px;top:300.5px;width:0;height:0;border-left:3px solid transparent;border-right:3px solid transparent;border-top:3px solid #bbb"></div>
<div class="a" style="left:737px;top:281px;width:316px;height:20px;background:#000;border:1px solid #3c3c3c"></div>
<svg class="a" style="left:1036px;top:283px" width="15" height="15" viewBox="0 0 15 15"><circle cx="7.5" cy="7.5" r="6.5" fill="#e05040"/><path d="M4.5 4.5L10.5 10.5M10.5 4.5L4.5 10.5" stroke="#fff" stroke-width="1.6"/></svg>
<div class="t" style="left:1247px;top:276.5px;line-height:16px;color:#a8a8a8;font-style:italic;">Drop media files here so you can preview which entries are relevant</div>
<div class="a" style="left:1751px;top:284px;width:63px;height:20px;background:#303030;border:1px solid #555"></div>
<div class="t" style="left:1770px;top:286.0px;line-height:16px;color:#d8d8d8;"><u>R</u>eset</div>
<div class="a" style="left:709px;top:321px;width:790px;height:646px;background:#000;border:1px solid #444"></div>
<div class="a" style="left:710px;top:323px;width:787px;height:21px;background:#202020"></div>
<div class="a" style="left:964px;top:323px;width:1px;height:20px;background:#3a3a3a"></div>
<div class="a" style="left:964px;top:344px;width:1px;height:606px;background:#0c1420"></div>
<div class="a" style="left:1015px;top:323px;width:1px;height:20px;background:#3a3a3a"></div>
<div class="a" style="left:1015px;top:344px;width:1px;height:606px;background:#0c1420"></div>
<div class="a" style="left:1077px;top:323px;width:1px;height:20px;background:#3a3a3a"></div>
<div class="a" style="left:1077px;top:344px;width:1px;height:606px;background:#0c1420"></div>
<div class="a" style="left:1153px;top:323px;width:1px;height:20px;background:#3a3a3a"></div>
<div class="a" style="left:1153px;top:344px;width:1px;height:606px;background:#0c1420"></div>
<div class="t" style="left:716px;top:325.0px;line-height:16px;color:#b8b8b8;">Label</div>
<div class="t" style="left:971px;top:325.0px;line-height:16px;color:#b8b8b8;">Group</div>
<div class="t" style="left:1022px;top:325.0px;line-height:16px;color:#b8b8b8;">Multiple</div>
<div class="t" style="left:1084px;top:325.0px;line-height:16px;color:#b8b8b8;">Type</div>
<div class="t" style="left:1159px;top:325.0px;line-height:16px;color:#b8b8b8;">Preview</div>
<svg class="a" style="left:1206px;top:329px" width="9" height="6" viewBox="0 0 9 6"><path d="M0 6L4.5 0L9 6Z" fill="#ccc"/></svg>
<div class="t" style="left:721px;top:344.0px;line-height:16px;color:#4a80b8;">Checked</div>
<div class="a" style="left:766px;top:352px;width:716px;height:1px;background:#173a5e"></div>
<div class="a" style="left:711px;top:362.8px;width:771px;height:15.4px;background:#003d73;border:1px solid #8fb0c8"></div>
<svg class="a" style="left:716px;top:364.5px" width="12" height="12" viewBox="0 0 12 12"><rect x="0.75" y="0.75" width="10.5" height="10.5" fill="#353535" stroke="#7a7a7a" stroke-width="1.2"/><path d="M2.5 6.5L5 9.5L10 2.5" stroke="#4cc040" stroke-width="1.8" fill="none"/></svg>
<div class="t" style="left:732px;top:362.5px;line-height:16px;color:#f0f0f0;">Format Profile</div>
<div class="t" style="left:971px;top:362.5px;line-height:16px;color:#f0f0f0;">General</div>
<div class="t" style="left:1022px;top:362.5px;line-height:16px;color:#f0f0f0;">False</div>
<div class="t" style="left:1084px;top:362.5px;line-height:16px;color:#f0f0f0;">string</div>
<div class="t" style="left:1159px;top:362.5px;line-height:16px;color:#f0f0f0;">OP-Atom</div>
<div class="t" style="left:721px;top:382.0px;line-height:16px;color:#4a80b8;">Unchecked</div>
<div class="a" style="left:776px;top:390px;width:706px;height:1px;background:#173a5e"></div>
<div class="a" style="left:710px;top:395px;width:772px;height:555px;overflow:hidden">
<svg class="a" style="left:6px;top:8.800000000000011px" width="12" height="12"><rect x="0.75" y="0.75" width="10.5" height="10.5" fill="#383838" stroke="#8a8a8a" stroke-width="1.2"/></svg>
<div class="t" style="left:22px;top:6.800000000000011px;line-height:16px;color:#c0c0c0;">Stream Size Proportion</div>
<div class="t" style="left:261px;top:6.800000000000011px;line-height:16px;color:#c0c0c0;">Audio</div>
<div class="t" style="left:312px;top:6.800000000000011px;line-height:16px;color:#c0c0c0;">True</div>
<div class="t" style="left:374px;top:6.800000000000011px;line-height:16px;color:#c0c0c0;">double</div>
<div class="t" style="left:449px;top:6.800000000000011px;line-height:16px;color:#c0c0c0;">0.34757</div>
<svg class="a" style="left:6px;top:26.30000000000001px" width="12" height="12"><rect x="0.75" y="0.75" width="10.5" height="10.5" fill="#383838" stroke="#8a8a8a" stroke-width="1.2"/></svg>
<div class="t" style="left:22px;top:24.30000000000001px;line-height:16px;color:#c0c0c0;">Stream Size Proportion</div>
<div class="t" style="left:261px;top:24.30000000000001px;line-height:16px;color:#c0c0c0;">General</div>
<div class="t" style="left:312px;top:24.30000000000001px;line-height:16px;color:#c0c0c0;">False</div>
<div class="t" style="left:374px;top:24.30000000000001px;line-height:16px;color:#c0c0c0;">double</div>
<div class="t" style="left:449px;top:24.30000000000001px;line-height:16px;color:#c0c0c0;">0.65243</div>
<svg class="a" style="left:6px;top:43.80000000000001px" width="12" height="12"><rect x="0.75" y="0.75" width="10.5" height="10.5" fill="#383838" stroke="#8a8a8a" stroke-width="1.2"/></svg>
<div class="t" style="left:22px;top:41.80000000000001px;line-height:16px;color:#c0c0c0;">Duration String/3</div>
<div class="t" style="left:261px;top:41.80000000000001px;line-height:16px;color:#c0c0c0;">General</div>
<div class="t" style="left:312px;top:41.80000000000001px;line-height:16px;color:#c0c0c0;">False</div>
<div class="t" style="left:374px;top:41.80000000000001px;line-height:16px;color:#c0c0c0;">string</div>
<div class="t" style="left:449px;top:41.80000000000001px;line-height:16px;color:#c0c0c0;">00:00:01.000</div>
<svg class="a" style="left:6px;top:61.30000000000001px" width="12" height="12"><rect x="0.75" y="0.75" width="10.5" height="10.5" fill="#383838" stroke="#8a8a8a" stroke-width="1.2"/></svg>
<div class="t" style="left:22px;top:59.30000000000001px;line-height:16px;color:#c0c0c0;">Duration String/5</div>
<div class="t" style="left:261px;top:59.30000000000001px;line-height:16px;color:#c0c0c0;">General</div>
<div class="t" style="left:312px;top:59.30000000000001px;line-height:16px;color:#c0c0c0;">False</div>
<div class="t" style="left:374px;top:59.30000000000001px;line-height:16px;color:#c0c0c0;">string</div>
<div class="t" style="left:449px;top:59.30000000000001px;line-height:16px;color:#c0c0c0;">00:00:01.000</div>
<svg class="a" style="left:6px;top:78.80000000000001px" width="12" height="12"><rect x="0.75" y="0.75" width="10.5" height="10.5" fill="#383838" stroke="#8a8a8a" stroke-width="1.2"/></svg>
<div class="t" style="left:22px;top:76.80000000000001px;line-height:16px;color:#c0c0c0;">Duration String/3</div>
<div class="t" style="left:261px;top:76.80000000000001px;line-height:16px;color:#c0c0c0;">Audio</div>
<div class="t" style="left:312px;top:76.80000000000001px;line-height:16px;color:#c0c0c0;">True</div>
<div class="t" style="left:374px;top:76.80000000000001px;line-height:16px;color:#c0c0c0;">duration</div>
<div class="t" style="left:449px;top:76.80000000000001px;line-height:16px;color:#c0c0c0;">00:00:01.000</div>
<svg class="a" style="left:6px;top:96.30000000000001px" width="12" height="12"><rect x="0.75" y="0.75" width="10.5" height="10.5" fill="#383838" stroke="#8a8a8a" stroke-width="1.2"/></svg>
<div class="t" style="left:22px;top:94.30000000000001px;line-height:16px;color:#c0c0c0;">Duration String/5</div>
<div class="t" style="left:261px;top:94.30000000000001px;line-height:16px;color:#c0c0c0;">Audio</div>
<div class="t" style="left:312px;top:94.30000000000001px;line-height:16px;color:#c0c0c0;">True</div>
<div class="t" style="left:374px;top:94.30000000000001px;line-height:16px;color:#c0c0c0;">string</div>
<div class="t" style="left:449px;top:94.30000000000001px;line-height:16px;color:#c0c0c0;">00:00:01.000</div>
<svg class="a" style="left:6px;top:113.79999999999995px" width="12" height="12"><rect x="0.75" y="0.75" width="10.5" height="10.5" fill="#383838" stroke="#8a8a8a" stroke-width="1.2"/></svg>
<div class="t" style="left:22px;top:111.79999999999995px;line-height:16px;color:#c0c0c0;">Audio Count</div>
<div class="t" style="left:261px;top:111.79999999999995px;line-height:16px;color:#c0c0c0;">General</div>
<div class="t" style="left:312px;top:111.79999999999995px;line-height:16px;color:#c0c0c0;">False</div>
<div class="t" style="left:374px;top:111.79999999999995px;line-height:16px;color:#c0c0c0;">number</div>
<div class="t" style="left:449px;top:111.79999999999995px;line-height:16px;color:#c0c0c0;">1</div>
<svg class="a" style="left:6px;top:131.29999999999995px" width="12" height="12"><rect x="0.75" y="0.75" width="10.5" height="10.5" fill="#383838" stroke="#8a8a8a" stroke-width="1.2"/></svg>
<div class="t" style="left:22px;top:129.29999999999995px;line-height:16px;color:#c0c0c0;">Audio Channels Total</div>
<div class="t" style="left:261px;top:129.29999999999995px;line-height:16px;color:#c0c0c0;">General</div>
<div class="t" style="left:312px;top:129.29999999999995px;line-height:16px;color:#c0c0c0;">False</div>
<div class="t" style="left:374px;top:129.29999999999995px;line-height:16px;color:#c0c0c0;">number</div>
<div class="t" style="left:449px;top:129.29999999999995px;line-height:16px;color:#c0c0c0;">1</div>
<svg class="a" style="left:6px;top:148.79999999999995px" width="12" height="12"><rect x="0.75" y="0.75" width="10.5" height="10.5" fill="#383838" stroke="#8a8a8a" stroke-width="1.2"/></svg>
<div class="t" style="left:22px;top:146.79999999999995px;line-height:16px;color:#c0c0c0;">Channels</div>
<div class="t" style="left:261px;top:146.79999999999995px;line-height:16px;color:#c0c0c0;">Audio</div>
<div class="t" style="left:312px;top:146.79999999999995px;line-height:16px;color:#c0c0c0;">True</div>
<div class="t" style="left:374px;top:146.79999999999995px;line-height:16px;color:#c0c0c0;">number</div>
<div class="t" style="left:449px;top:146.79999999999995px;line-height:16px;color:#c0c0c0;">1</div>
<svg class="a" style="left:6px;top:166.29999999999995px" width="12" height="12"><rect x="0.75" y="0.75" width="10.5" height="10.5" fill="#383838" stroke="#8a8a8a" stroke-width="1.2"/></svg>
<div class="t" style="left:22px;top:164.29999999999995px;line-height:16px;color:#c0c0c0;">ID</div>
<div class="t" style="left:261px;top:164.29999999999995px;line-height:16px;color:#c0c0c0;">Audio</div>
<div class="t" style="left:312px;top:164.29999999999995px;line-height:16px;color:#c0c0c0;">True</div>
<div class="t" style="left:374px;top:164.29999999999995px;line-height:16px;color:#c0c0c0;">number</div>
<div class="t" style="left:449px;top:164.29999999999995px;line-height:16px;color:#c0c0c0;">1</div>
<svg class="a" style="left:6px;top:183.79999999999995px" width="12" height="12"><rect x="0.75" y="0.75" width="10.5" height="10.5" fill="#383838" stroke="#8a8a8a" stroke-width="1.2"/></svg>
<div class="t" style="left:22px;top:181.79999999999995px;line-height:16px;color:#c0c0c0;">Bit Rate String</div>
<div class="t" style="left:261px;top:181.79999999999995px;line-height:16px;color:#c0c0c0;">Audio</div>
<div class="t" style="left:312px;top:181.79999999999995px;line-height:16px;color:#c0c0c0;">True</div>
<div class="t" style="left:374px;top:181.79999999999995px;line-height:16px;color:#c0c0c0;">string</div>
<div class="t" style="left:449px;top:181.79999999999995px;line-height:16px;color:#c0c0c0;">1 152 kb/s</div>
<svg class="a" style="left:6px;top:201.29999999999995px" width="12" height="12"><rect x="0.75" y="0.75" width="10.5" height="10.5" fill="#383838" stroke="#8a8a8a" stroke-width="1.2"/></svg>
<div class="t" style="left:22px;top:199.29999999999995px;line-height:16px;color:#c0c0c0;">Channels String</div>
<div class="t" style="left:261px;top:199.29999999999995px;line-height:16px;color:#c0c0c0;">Audio</div>
<div class="t" style="left:312px;top:199.29999999999995px;line-height:16px;color:#c0c0c0;">True</div>
<div class="t" style="left:374px;top:199.29999999999995px;line-height:16px;color:#c0c0c0;">string</div>
<div class="t" style="left:449px;top:199.29999999999995px;line-height:16px;color:#c0c0c0;">1 channel</div>
<svg class="a" style="left:6px;top:218.79999999999995px" width="12" height="12"><rect x="0.75" y="0.75" width="10.5" height="10.5" fill="#383838" stroke="#8a8a8a" stroke-width="1.2"/></svg>
<div class="t" style="left:22px;top:216.79999999999995px;line-height:16px;color:#c0c0c0;">Duration String</div>
<div class="t" style="left:261px;top:216.79999999999995px;line-height:16px;color:#c0c0c0;">General</div>
<div class="t" style="left:312px;top:216.79999999999995px;line-height:16px;color:#c0c0c0;">False</div>
<div class="t" style="left:374px;top:216.79999999999995px;line-height:16px;color:#c0c0c0;">string</div>
<div class="t" style="left:449px;top:216.79999999999995px;line-height:16px;color:#c0c0c0;">1 s 0 ms</div>
<svg class="a" style="left:6px;top:236.29999999999995px" width="12" height="12"><rect x="0.75" y="0.75" width="10.5" height="10.5" fill="#383838" stroke="#8a8a8a" stroke-width="1.2"/></svg>
<div class="t" style="left:22px;top:234.29999999999995px;line-height:16px;color:#c0c0c0;">Duration String</div>
<div class="t" style="left:261px;top:234.29999999999995px;line-height:16px;color:#c0c0c0;">Audio</div>
<div class="t" style="left:312px;top:234.29999999999995px;line-height:16px;color:#c0c0c0;">True</div>
<div class="t" style="left:374px;top:234.29999999999995px;line-height:16px;color:#c0c0c0;">string</div>
<div class="t" style="left:449px;top:234.29999999999995px;line-height:16px;color:#c0c0c0;">1 s 0 ms</div>
<svg class="a" style="left:6px;top:253.79999999999995px" width="12" height="12"><rect x="0.75" y="0.75" width="10.5" height="10.5" fill="#383838" stroke="#8a8a8a" stroke-width="1.2"/></svg>
<div class="t" style="left:22px;top:251.79999999999995px;line-height:16px;color:#c0c0c0;">Duration</div>
<div class="t" style="left:261px;top:251.79999999999995px;line-height:16px;color:#c0c0c0;">General</div>
<div class="t" style="left:312px;top:251.79999999999995px;line-height:16px;color:#c0c0c0;">False</div>
<div class="t" style="left:374px;top:251.79999999999995px;line-height:16px;color:#c0c0c0;">number</div>
<div class="t" style="left:449px;top:251.79999999999995px;line-height:16px;color:#c0c0c0;">1.000</div>
<svg class="a" style="left:6px;top:271.29999999999995px" width="12" height="12"><rect x="0.75" y="0.75" width="10.5" height="10.5" fill="#383838" stroke="#8a8a8a" stroke-width="1.2"/></svg>
<div class="t" style="left:22px;top:269.29999999999995px;line-height:16px;color:#c0c0c0;">Duration</div>
<div class="t" style="left:261px;top:269.29999999999995px;line-height:16px;color:#c0c0c0;">Audio</div>
<div class="t" style="left:312px;top:269.29999999999995px;line-height:16px;color:#c0c0c0;">True</div>
<div class="t" style="left:374px;top:269.29999999999995px;line-height:16px;color:#c0c0c0;">string</div>
<div class="t" style="left:449px;top:269.29999999999995px;line-height:16px;color:#c0c0c0;">1.000</div>
<svg class="a" style="left:6px;top:288.79999999999995px" width="12" height="12"><rect x="0.75" y="0.75" width="10.5" height="10.5" fill="#383838" stroke="#8a8a8a" stroke-width="1.2"/></svg>
<div class="t" style="left:22px;top:286.79999999999995px;line-height:16px;color:#c0c0c0;">Format Version</div>
<div class="t" style="left:261px;top:286.79999999999995px;line-height:16px;color:#c0c0c0;">General</div>
<div class="t" style="left:312px;top:286.79999999999995px;line-height:16px;color:#c0c0c0;">False</div>
<div class="t" style="left:374px;top:286.79999999999995px;line-height:16px;color:#c0c0c0;">string</div>
<div class="t" style="left:449px;top:286.79999999999995px;line-height:16px;color:#c0c0c0;">1.2</div>
<svg class="a" style="left:6px;top:306.29999999999995px" width="12" height="12"><rect x="0.75" y="0.75" width="10.5" height="10.5" fill="#383838" stroke="#8a8a8a" stroke-width="1.2"/></svg>
<div class="t" style="left:22px;top:304.29999999999995px;line-height:16px;color:#c0c0c0;">Bit Rate</div>
<div class="t" style="left:261px;top:304.29999999999995px;line-height:16px;color:#c0c0c0;">Audio</div>
<div class="t" style="left:312px;top:304.29999999999995px;line-height:16px;color:#c0c0c0;">True</div>
<div class="t" style="left:374px;top:304.29999999999995px;line-height:16px;color:#c0c0c0;">number</div>
<div class="t" style="left:449px;top:304.29999999999995px;line-height:16px;color:#c0c0c0;">1152000</div>
<svg class="a" style="left:6px;top:323.79999999999995px" width="12" height="12"><rect x="0.75" y="0.75" width="10.5" height="10.5" fill="#383838" stroke="#8a8a8a" stroke-width="1.2"/></svg>
<div class="t" style="left:22px;top:321.79999999999995px;line-height:16px;color:#c0c0c0;">Stream Size String/4</div>
<div class="t" style="left:261px;top:321.79999999999995px;line-height:16px;color:#c0c0c0;">Audio</div>
<div class="t" style="left:312px;top:321.79999999999995px;line-height:16px;color:#c0c0c0;">True</div>
<div class="t" style="left:374px;top:321.79999999999995px;line-height:16px;color:#c0c0c0;">string</div>
<div class="t" style="left:449px;top:321.79999999999995px;line-height:16px;color:#c0c0c0;">140.6 KiB</div>
<svg class="a" style="left:6px;top:341.29999999999995px" width="12" height="12"><rect x="0.75" y="0.75" width="10.5" height="10.5" fill="#383838" stroke="#8a8a8a" stroke-width="1.2"/></svg>
<div class="t" style="left:22px;top:339.29999999999995px;line-height:16px;color:#c0c0c0;">Stream Size String/1</div>
<div class="t" style="left:261px;top:339.29999999999995px;line-height:16px;color:#c0c0c0;">Audio</div>
<div class="t" style="left:312px;top:339.29999999999995px;line-height:16px;color:#c0c0c0;">True</div>
<div class="t" style="left:374px;top:339.29999999999995px;line-height:16px;color:#c0c0c0;">string</div>
<div class="t" style="left:449px;top:339.29999999999995px;line-height:16px;color:#c0c0c0;">141 KiB</div>
<svg class="a" style="left:6px;top:358.79999999999995px" width="12" height="12"><rect x="0.75" y="0.75" width="10.5" height="10.5" fill="#383838" stroke="#8a8a8a" stroke-width="1.2"/></svg>
<div class="t" style="left:22px;top:356.79999999999995px;line-height:16px;color:#c0c0c0;">Stream Size String/2</div>
<div class="t" style="left:261px;top:356.79999999999995px;line-height:16px;color:#c0c0c0;">Audio</div>
<div class="t" style="left:312px;top:356.79999999999995px;line-height:16px;color:#c0c0c0;">True</div>
<div class="t" style="left:374px;top:356.79999999999995px;line-height:16px;color:#c0c0c0;">string</div>
<div class="t" style="left:449px;top:356.79999999999995px;line-height:16px;color:#c0c0c0;">141 KiB</div>
<svg class="a" style="left:6px;top:376.29999999999995px" width="12" height="12"><rect x="0.75" y="0.75" width="10.5" height="10.5" fill="#383838" stroke="#8a8a8a" stroke-width="1.2"/></svg>
<div class="t" style="left:22px;top:374.29999999999995px;line-height:16px;color:#c0c0c0;">Stream Size String/3</div>
<div class="t" style="left:261px;top:374.29999999999995px;line-height:16px;color:#c0c0c0;">Audio</div>
<div class="t" style="left:312px;top:374.29999999999995px;line-height:16px;color:#c0c0c0;">True</div>
<div class="t" style="left:374px;top:374.29999999999995px;line-height:16px;color:#c0c0c0;">string</div>
<div class="t" style="left:449px;top:374.29999999999995px;line-height:16px;color:#c0c0c0;">141 KiB</div>
<svg class="a" style="left:6px;top:393.79999999999995px" width="12" height="12"><rect x="0.75" y="0.75" width="10.5" height="10.5" fill="#383838" stroke="#8a8a8a" stroke-width="1.2"/></svg>
<div class="t" style="left:22px;top:391.79999999999995px;line-height:16px;color:#c0c0c0;">Stream Size String</div>
<div class="t" style="left:261px;top:391.79999999999995px;line-height:16px;color:#c0c0c0;">Audio</div>
<div class="t" style="left:312px;top:391.79999999999995px;line-height:16px;color:#c0c0c0;">True</div>
<div class="t" style="left:374px;top:391.79999999999995px;line-height:16px;color:#c0c0c0;">string</div>
<div class="t" style="left:449px;top:391.79999999999995px;line-height:16px;color:#c0c0c0;">141 KiB (35%)</div>
<svg class="a" style="left:6px;top:411.29999999999995px" width="12" height="12"><rect x="0.75" y="0.75" width="10.5" height="10.5" fill="#383838" stroke="#8a8a8a" stroke-width="1.2"/></svg>
<div class="t" style="left:22px;top:409.29999999999995px;line-height:16px;color:#c0c0c0;">Stream Size String/5</div>
<div class="t" style="left:261px;top:409.29999999999995px;line-height:16px;color:#c0c0c0;">Audio</div>
<div class="t" style="left:312px;top:409.29999999999995px;line-height:16px;color:#c0c0c0;">True</div>
<div class="t" style="left:374px;top:409.29999999999995px;line-height:16px;color:#c0c0c0;">string</div>
<div class="t" style="left:449px;top:409.29999999999995px;line-height:16px;color:#c0c0c0;">141 KiB (35%)</div>
<svg class="a" style="left:6px;top:428.79999999999995px" width="12" height="12"><rect x="0.75" y="0.75" width="10.5" height="10.5" fill="#383838" stroke="#8a8a8a" stroke-width="1.2"/></svg>
<div class="t" style="left:22px;top:426.79999999999995px;line-height:16px;color:#c0c0c0;">Stream Size</div>
<div class="t" style="left:261px;top:426.79999999999995px;line-height:16px;color:#c0c0c0;">Audio</div>
<div class="t" style="left:312px;top:426.79999999999995px;line-height:16px;color:#c0c0c0;">True</div>
<div class="t" style="left:374px;top:426.79999999999995px;line-height:16px;color:#c0c0c0;">size</div>
<div class="t" style="left:449px;top:426.79999999999995px;line-height:16px;color:#c0c0c0;">144000</div>
<svg class="a" style="left:6px;top:446.29999999999995px" width="12" height="12"><rect x="0.75" y="0.75" width="10.5" height="10.5" fill="#383838" stroke="#8a8a8a" stroke-width="1.2"/></svg>
<div class="t" style="left:22px;top:444.29999999999995px;line-height:16px;color:#c0c0c0;">Encoded Library Version</div>
<div class="t" style="left:261px;top:444.29999999999995px;line-height:16px;color:#c0c0c0;">General</div>
<div class="t" style="left:312px;top:444.29999999999995px;line-height:16px;color:#c0c0c0;">False</div>
<div class="t" style="left:374px;top:444.29999999999995px;line-height:16px;color:#c0c0c0;">string</div>
<div class="t" style="left:449px;top:444.29999999999995px;line-height:16px;color:#c0c0c0;">2.0.9.122.1</div>
<svg class="a" style="left:6px;top:463.79999999999995px" width="12" height="12"><rect x="0.75" y="0.75" width="10.5" height="10.5" fill="#383838" stroke="#8a8a8a" stroke-width="1.2"/></svg>
<div class="t" style="left:22px;top:461.79999999999995px;line-height:16px;color:#c0c0c0;">Encoded Date</div>
<div class="t" style="left:261px;top:461.79999999999995px;line-height:16px;color:#c0c0c0;">General</div>
<div class="t" style="left:312px;top:461.79999999999995px;line-height:16px;color:#c0c0c0;">False</div>
<div class="t" style="left:374px;top:461.79999999999995px;line-height:16px;color:#c0c0c0;">date</div>
<div class="t" style="left:449px;top:461.79999999999995px;line-height:16px;color:#c0c0c0;">2023-10-11 22:00:33.000</div>
<svg class="a" style="left:6px;top:481.29999999999995px" width="12" height="12"><rect x="0.75" y="0.75" width="10.5" height="10.5" fill="#383838" stroke="#8a8a8a" stroke-width="1.2"/></svg>
<div class="t" style="left:22px;top:479.29999999999995px;line-height:16px;color:#c0c0c0;">File Created Date</div>
<div class="t" style="left:261px;top:479.29999999999995px;line-height:16px;color:#c0c0c0;">General</div>
<div class="t" style="left:312px;top:479.29999999999995px;line-height:16px;color:#c0c0c0;">False</div>
<div class="t" style="left:374px;top:479.29999999999995px;line-height:16px;color:#c0c0c0;">datetime</div>
<div class="t" style="left:449px;top:479.29999999999995px;line-height:16px;color:#c0c0c0;">2023-10-12 12:59:54.000 UTC</div>
<svg class="a" style="left:6px;top:498.79999999999995px" width="12" height="12"><rect x="0.75" y="0.75" width="10.5" height="10.5" fill="#383838" stroke="#8a8a8a" stroke-width="1.2"/></svg>
<div class="t" style="left:22px;top:496.79999999999995px;line-height:16px;color:#c0c0c0;">File Modified Date</div>
<div class="t" style="left:261px;top:496.79999999999995px;line-height:16px;color:#c0c0c0;">General</div>
<div class="t" style="left:312px;top:496.79999999999995px;line-height:16px;color:#c0c0c0;">False</div>
<div class="t" style="left:374px;top:496.79999999999995px;line-height:16px;color:#c0c0c0;">datetime</div>
<div class="t" style="left:449px;top:496.79999999999995px;line-height:16px;color:#c0c0c0;">2023-10-12 12:59:54.000 UTC</div>
<svg class="a" style="left:6px;top:516.3px" width="12" height="12"><rect x="0.75" y="0.75" width="10.5" height="10.5" fill="#383838" stroke="#8a8a8a" stroke-width="1.2"/></svg>
<div class="t" style="left:22px;top:514.3px;line-height:16px;color:#c0c0c0;">Bit Depth</div>
<div class="t" style="left:261px;top:514.3px;line-height:16px;color:#c0c0c0;">Audio</div>
<div class="t" style="left:312px;top:514.3px;line-height:16px;color:#c0c0c0;">True</div>
<div class="t" style="left:374px;top:514.3px;line-height:16px;color:#c0c0c0;">number</div>
<div class="t" style="left:449px;top:514.3px;line-height:16px;color:#c0c0c0;">24</div>
<svg class="a" style="left:6px;top:533.8px" width="12" height="12"><rect x="0.75" y="0.75" width="10.5" height="10.5" fill="#383838" stroke="#8a8a8a" stroke-width="1.2"/></svg>
<div class="t" style="left:22px;top:531.8px;line-height:16px;color:#c0c0c0;">Bit Depth String</div>
<div class="t" style="left:261px;top:531.8px;line-height:16px;color:#c0c0c0;">Audio</div>
<div class="t" style="left:312px;top:531.8px;line-height:16px;color:#c0c0c0;">True</div>
<div class="t" style="left:374px;top:531.8px;line-height:16px;color:#c0c0c0;">string</div>
<div class="t" style="left:449px;top:531.8px;line-height:16px;color:#c0c0c0;">24 bits</div>
<svg class="a" style="left:6px;top:551.3px" width="12" height="12"><rect x="0.75" y="0.75" width="10.5" height="10.5" fill="#383838" stroke="#8a8a8a" stroke-width="1.2"/></svg>
<div class="t" style="left:22px;top:549.3px;line-height:16px;color:#c0c0c0;">Stream Size String/4</div>
<div class="t" style="left:261px;top:549.3px;line-height:16px;color:#c0c0c0;">General</div>
<div class="t" style="left:312px;top:549.3px;line-height:16px;color:#c0c0c0;">False</div>
<div class="t" style="left:374px;top:549.3px;line-height:16px;color:#c0c0c0;">string</div>
<div class="t" style="left:449px;top:549.3px;line-height:16px;color:#c0c0c0;">264 KiB</div>
</div>
<div class="a" style="left:710px;top:950px;width:772px;height:16px;background:#222"></div>
<div class="a" style="left:725px;top:951px;width:723px;height:13px;background:#454545"></div>
<svg class="a" style="left:713px;top:953px" width="8" height="10" viewBox="0 0 8 10"><path d="M6 1L2 5L6 9" stroke="#888" stroke-width="1.3" fill="none"/></svg>
<svg class="a" style="left:1471px;top:953px" width="8" height="10" viewBox="0 0 8 10"><path d="M2 1L6 5L2 9" stroke="#888" stroke-width="1.3" fill="none"/></svg>
<div class="a" style="left:1482px;top:323px;width:15px;height:627px;background:#222"></div>
<div class="a" style="left:1482px;top:337px;width:14px;height:16px;background:#454545"></div>
<svg class="a" style="left:1486px;top:325px" width="8" height="6" viewBox="0 0 8 6"><path d="M1 5L4 2L7 5" stroke="#888" stroke-width="1.2" fill="none"/></svg>
<svg class="a" style="left:1486px;top:940px" width="8" height="6" viewBox="0 0 8 6"><path d="M1 1L4 4L7 1" stroke="#888" stroke-width="1.2" fill="none"/></svg>
<div class="a" style="left:1482px;top:950px;width:15px;height:16px;background:#222"></div>
<div class="t" style="left:1505px;top:325.5px;line-height:16px;color:#3d8ad0;font-weight:bold;letter-spacing:-0.05px;font-size:10.5px;">Separator for Multiple:</div>
<div class="a" style="left:1633px;top:324px;width:49px;height:20px;background:#000;border:1px solid #4a4a4a"></div>
<div class="a" style="left:1639px;top:328px;width:1px;height:11px;background:#ddd"></div>
<div class="t" style="left:1505px;top:345.5px;line-height:16px;color:#c8c8c8;letter-spacing:-0.23px;">When "Multi" is True, "Type" will always be "string"</div>
<div class="t" style="left:1505px;top:364.5px;line-height:16px;color:#3d8ad0;font-weight:bold;letter-spacing:-0.05px;font-size:10.5px;">Label:</div>
<div class="a" style="left:1505px;top:383px;width:310px;height:21px;background:#000;border:1px solid #4a4a4a"></div>
<div class="t" style="left:1508px;top:385.5px;line-height:16px;color:#e0e0e0;">Format Profile</div>
<div class="t" style="left:1505px;top:404.5px;line-height:16px;color:#3d8ad0;font-weight:bold;letter-spacing:-0.05px;font-size:10.5px;">Header:</div>
<div class="a" style="left:1505px;top:422px;width:310px;height:21px;background:#000;border:1px solid #4a4a4a"></div>
<div class="t" style="left:1508px;top:424.5px;line-height:16px;color:#e0e0e0;">Format Profile</div>
<div class="t" style="left:1505px;top:451.0px;line-height:16px;color:#3d8ad0;font-weight:bold;letter-spacing:-0.05px;font-size:10.5px;">Multiple:</div>
<div class="a" style="left:1597px;top:449px;width:127px;height:20px;background:#262626;border:1px solid #333"></div>
<div class="t" style="left:1601px;top:451.0px;line-height:16px;color:#4a4a4a;">False</div>
<div class="t" style="left:1505px;top:477.0px;line-height:16px;color:#3d8ad0;font-weight:bold;letter-spacing:-0.05px;font-size:10.5px;">Type:</div>
<div class="a" style="left:1597px;top:475px;width:127px;height:20px;background:#303030;border:1px solid #4a4a4a"></div>
<div class="t" style="left:1601px;top:477.0px;line-height:16px;color:#e0e0e0;">string</div>
<svg class="a" style="left:1711px;top:482px" width="9" height="6" viewBox="0 0 9 6"><path d="M1 1L4.5 4.5L8 1" stroke="#bbb" fill="none" stroke-width="1.2"/></svg>
<div class="t" style="left:1505px;top:503.0px;line-height:16px;color:#3d8ad0;font-weight:bold;letter-spacing:-0.05px;font-size:10.5px;">Alignment:</div>
<div class="a" style="left:1597px;top:501px;width:127px;height:20px;background:#303030;border:1px solid #4a4a4a"></div>
<div class="t" style="left:1601px;top:503.0px;line-height:16px;color:#e0e0e0;">Right</div>
<svg class="a" style="left:1711px;top:508px" width="9" height="6" viewBox="0 0 9 6"><path d="M1 1L4.5 4.5L8 1" stroke="#bbb" fill="none" stroke-width="1.2"/></svg>
<div class="t" style="left:1505px;top:526.5px;line-height:16px;color:#3d8ad0;font-weight:bold;letter-spacing:-0.05px;font-size:10.5px;">Pattern:</div>
<div class="a" style="left:1505px;top:544px;width:187px;height:20px;background:#000;border:1px solid #4a4a4a"></div>
<div class="a" style="left:1695px;top:544px;width:120px;height:20px;background:#000;border:1px solid #4a4a4a"></div>
<div class="t" style="left:1505px;top:569.5px;line-height:16px;color:#3d8ad0;font-weight:bold;letter-spacing:-0.05px;font-size:10.5px;">File Extensions:</div>
<div class="a" style="left:1505px;top:587px;width:310px;height:378px;background:#000;border:1px solid #4a4a4a"></div>
<svg class="a" style="left:1510px;top:592px" width="12" height="12" viewBox="0 0 12 12"><rect x="0.75" y="0.75" width="10.5" height="10.5" fill="#353535" stroke="#7a7a7a" stroke-width="1.2"/></svg>
<div class="t" style="left:1525px;top:590.0px;line-height:16px;color:#d0d0d0;">Edit as text</div>
<div class="a" style="left:1507px;top:609px;width:68px;height:18px;background:#161616;border:1px solid #484848;border-radius:2px"></div>
<div class="t" style="left:1511px;top:610.5px;line-height:16px;color:#c8c8c8;">grp:Music</div>
<svg class="a" style="left:1563px;top:614px" width="8" height="8" viewBox="0 0 8 8"><path d="M1 1L7 7M7 1L1 7" stroke="#ccc" stroke-width="1.6"/></svg>
<div class="a" style="left:1577px;top:609px;width:72px;height:18px;background:#161616;border:1px solid #484848;border-radius:2px"></div>
<div class="t" style="left:1581px;top:610.5px;line-height:16px;color:#c8c8c8;">grp:Movies</div>
<svg class="a" style="left:1637px;top:614px" width="8" height="8" viewBox="0 0 8 8"><path d="M1 1L7 7M7 1L1 7" stroke="#ccc" stroke-width="1.6"/></svg>
<div class="a" style="left:1651px;top:609px;width:72px;height:18px;background:#161616;border:1px solid #484848;border-radius:2px"></div>
<div class="t" style="left:1655px;top:610.5px;line-height:16px;color:#c8c8c8;">grp:Images</div>
<svg class="a" style="left:1711px;top:614px" width="8" height="8" viewBox="0 0 8 8"><path d="M1 1L7 7M7 1L1 7" stroke="#ccc" stroke-width="1.6"/></svg>
<div class="a" style="left:1725px;top:609px;width:43px;height:18px;background:#161616;border:1px solid #484848;border-radius:2px"></div>
<div class="t" style="left:1729px;top:610.5px;line-height:16px;color:#c8c8c8;">.mxf</div>
<svg class="a" style="left:1756px;top:614px" width="8" height="8" viewBox="0 0 8 8"><path d="M1 1L7 7M7 1L1 7" stroke="#ccc" stroke-width="1.6"/></svg>
<div class="a" style="left:1769px;top:609px;width:20px;height:18px;background:#1c1c1c;border:1px solid #444;border-radius:2px"></div>
<div class="t" style="left:1774px;top:610.0px;line-height:16px;color:#ccc;font-size:13px;">+</div>
<div class="t" style="left:709px;top:972.0px;line-height:16px;color:#c8c8c8;"><span style="color:#3d8ad0;font-weight:bold;letter-spacing:-0.4px">Format_Profile:</span> Profile of the Format</div>
<svg class="a" style="left:1819px;top:991px" width="8" height="8" viewBox="0 0 8 8"><path d="M7 1V7H1Z" fill="none" stroke="#777"/></svg>
</body></html>
